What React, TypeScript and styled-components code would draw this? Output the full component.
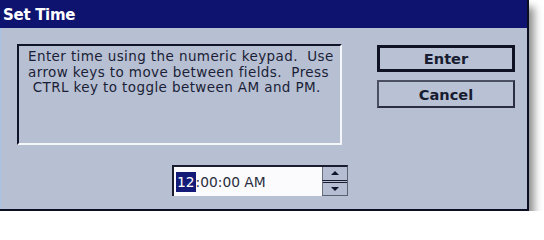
import React from "react";
import styled, { createGlobalStyle } from "styled-components";

const Global = createGlobalStyle`
  html, body { margin: 0; padding: 0; background: #ffffff; }
  body { font-family: "DejaVu Sans", Verdana, sans-serif; }
`;

const Window = styled.div`
  width: 527px;
  height: 209px;
  background: #b7bfd3;
  border-right: 2px solid #0c0f24;
  border-bottom: 2px solid #0c0f24;
  box-shadow: 5px 7px 8px rgba(0, 0, 0, 0.45);
  display: flex;
  flex-direction: column;
`;

const TitleBar = styled.div`
  height: 28px;
  background: #0e1370;
  color: #ffffff;
  font-weight: bold;
  font-size: 15px;
  line-height: 31px;
  padding-left: 3px;
  letter-spacing: -0.3px;
`;

const Body = styled.div`
  flex: 1;
  display: flex;
  gap: 29px;
  padding: 16px 0 0 16px;
  border-left: 1px solid #a6c4e6;
`;

const LeftCol = styled.div`
  display: flex;
  flex-direction: column;
`;

const MessageBox = styled.div`
  box-sizing: border-box;
  width: 325px;
  height: 101px;
  border-top: 2px solid #10142a;
  border-left: 2px solid #10142a;
  border-bottom: 2px solid #f4f6fa;
  border-right: 2px solid #f4f6fa;
  padding: 3px 0 0 9px;
  color: #1a1e36;
  font-size: 13.5px;
  letter-spacing: 0.4px;
  line-height: 15.5px;
  white-space: pre;
`;

const TimeRow = styled.div`
  display: flex;
  margin: 20px 0 0 155px;
`;

const Edit = styled.div`
  box-sizing: border-box;
  width: 150px;
  height: 31px;
  background: #fbfbfd;
  border-top: 2px solid #1a1d30;
  border-left: 2px solid #1a1d30;
  display: flex;
  align-items: center;
  padding-left: 2px;
  font-size: 13.8px;
  color: #2a2e40;
`;

const Selected = styled.span`
  background: #131a78;
  color: #ffffff;
  padding: 2px 1px;
`;

const Spinner = styled.div`
  box-sizing: border-box;
  width: 26px;
  height: 31px;
  display: flex;
  flex-direction: column;
  border-top: 2px solid #1a1d30;
  border-right: 1px solid #5a6070;
  border-bottom: 1px solid #5a6070;
`;

const SpinButton = styled.div<{ $down?: boolean }>`
  flex: 1;
  display: flex;
  align-items: center;
  justify-content: center;
  background: #b5bdd2;
  border-left: 1px solid #6a7080;
  ${(p) => (p.$down ? "border-top: 3px double #1a1d30;" : "")}
`;

const Arrow = styled.div<{ $down?: boolean }>`
  width: 0;
  height: 0;
  border-left: 4px solid transparent;
  border-right: 4px solid transparent;
  ${(p) =>
    p.$down
      ? "border-top: 4px solid #111528;"
      : "border-bottom: 4px solid #111528;"}
`;

const RightCol = styled.div`
  display: flex;
  flex-direction: column;
  gap: 8px;
  padding-top: 1px;
`;

const Button = styled.div<{ $default?: boolean }>`
  box-sizing: border-box;
  width: 138px;
  height: ${(p) => (p.$default ? "27px" : "28px")};
  display: flex;
  align-items: center;
  justify-content: center;
  font-weight: bold;
  font-size: 14.6px;
  color: #181c30;
  background: #b9c1d5;
  ${(p) =>
    p.$default
      ? "border: 3px solid #0f1222;"
      : "border: 2px solid #2a2e40; border-top-color: #4a4f62; border-left-color: #4a4f62;"}
`;

export default function App() {
  return (
    <>
      <Global />
      <Window>
        <TitleBar>Set Time</TitleBar>
        <Body>
          <LeftCol>
            <MessageBox>
              {"Enter time using the numeric keypad.  Use\narrow keys to move between fields.  Press\n CTRL key to toggle between AM and PM."}
            </MessageBox>
            <TimeRow>
              <Edit>
                <Selected>12</Selected>:00:00 AM
              </Edit>
              <Spinner>
                <SpinButton>
                  <Arrow />
                </SpinButton>
                <SpinButton $down>
                  <Arrow $down />
                </SpinButton>
              </Spinner>
            </TimeRow>
          </LeftCol>
          <RightCol>
            <Button $default>Enter</Button>
            <Button>Cancel</Button>
          </RightCol>
        </Body>
      </Window>
    </>
  );
}
